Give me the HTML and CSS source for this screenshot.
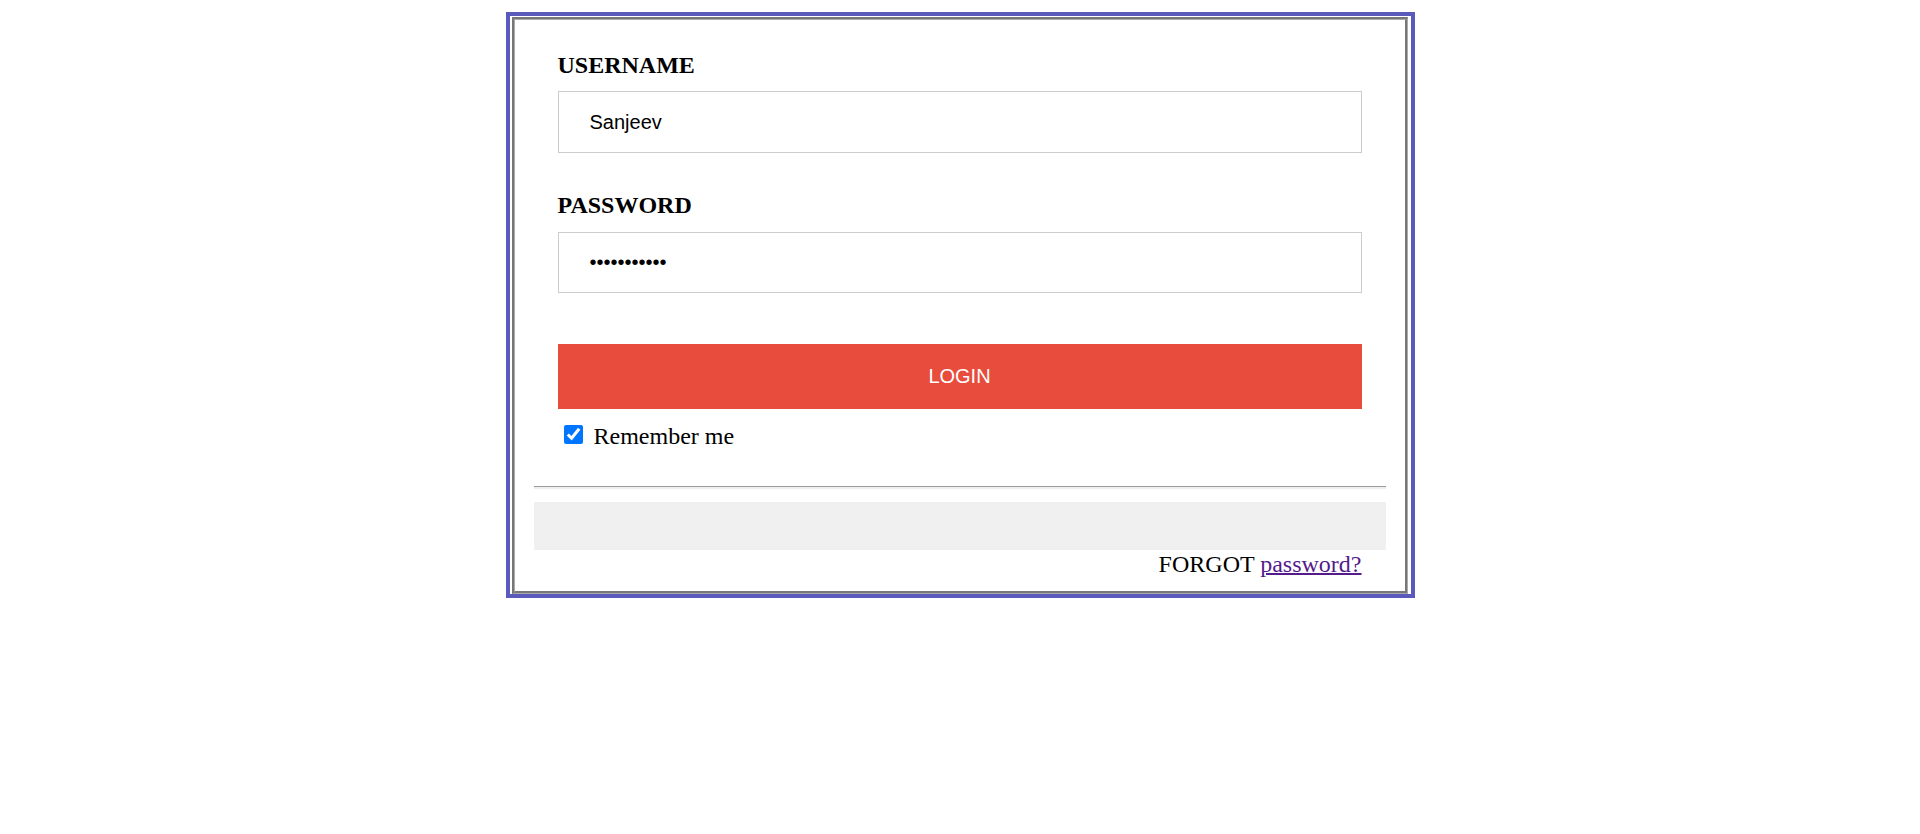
FILE: index.html
```html
<!DOCTYPE html>
<html lang="en">
<head>
<meta charset="utf-8">
<title>Login</title>
<link rel="stylesheet" href="styles.css">
</head>
<body>
<div class="card">
  <div class="frame">
    <div class="frame-inner">
      <div class="fields">
        <label class="label label-user" for="user">USERNAME</label>
        <input class="field field-user" id="user" type="text" value="Sanjeev">
        <label class="label label-pass" for="pass">PASSWORD</label>
        <input class="field field-pass" id="pass" type="password" value="abcdefghijk">
        <button class="login" type="button">LOGIN</button>
        <div class="remember">
          <input class="check" type="checkbox" checked>
          <span class="remember-text">Remember me</span>
        </div>
      </div>
      <div class="rule"></div>
      <div class="gray"></div>
      <div class="forgot">FORGOT <a class="forgot-link" href="#">password?</a></div>
    </div>
  </div>
</div>
</body>
</html>
```

FILE: styles.css
```css
html, body {
  margin: 0;
  padding: 0;
  background: #ffffff;
}

body {
  padding-top: 12px;
  font-family: "Liberation Serif", "Times New Roman", serif;
  font-size: 24px;
  color: #000000;
}

.card {
  width: 896px;
  margin: 0 auto;
  border: 4px solid #5a5abd;
  padding: 1px 3px 0 2px;
}

.frame {
  border-style: solid;
  border-width: 2px 1px 1px 2px;
  border-color: #777777 #aaaaaa #aaaaaa #777777;
}

.frame-inner {
  border-style: solid;
  border-width: 1px 2px 2px 1px;
  border-color: #aaaaaa #777777 #777777 #aaaaaa;
  padding: 32px 19px 13px 19px;
}

.fields {
  display: flex;
  flex-direction: column;
  padding: 0 24px;
}

.label {
  display: block;
  font-weight: bold;
  font-size: 24px;
  line-height: normal;
}

.label-user {
  margin-bottom: 12px;
}

.label-pass {
  margin-top: 39px;
  margin-bottom: 13px;
}

.field {
  display: block;
  box-sizing: border-box;
  width: 100%;
  margin: 0;
  border: 1px solid #cccccc;
  border-radius: 0;
  background: #ffffff;
  padding: 0 20px 0 31px;
  font-family: "Liberation Sans", Arial, sans-serif;
  font-size: 20px;
  color: #000000;
  outline: none;
}

.field-user {
  height: 62px;
}

.field-pass {
  height: 61px;
}

.login {
  display: block;
  box-sizing: border-box;
  width: 100%;
  height: 65px;
  margin: 51px 0 0 0;
  border: none;
  border-radius: 0;
  background: #e74c3c;
  color: #ffffff;
  font-family: "Liberation Sans", Arial, sans-serif;
  font-size: 20px;
  padding: 0;
}

.remember {
  display: flex;
  align-items: flex-start;
  margin-top: 14px;
  line-height: normal;
}

.check {
  width: 19px;
  height: 19px;
  margin: 2px 11px 0 6px;
  accent-color: #0075ff;
  flex: none;
}

.rule {
  margin-top: 36px;
  height: 0;
  border-top: 1px solid #9a9a9a;
  border-bottom: 2px solid #eeeeee;
}

.gray {
  margin-top: 13px;
  height: 48px;
  background: #f0f0f0;
}

.forgot {
  margin-top: 1px;
  padding: 0 24px;
  text-align: right;
  line-height: normal;
}

.forgot-link {
  color: #551a8b;
  text-decoration: underline;
  text-decoration-thickness: 2px;
}
```
